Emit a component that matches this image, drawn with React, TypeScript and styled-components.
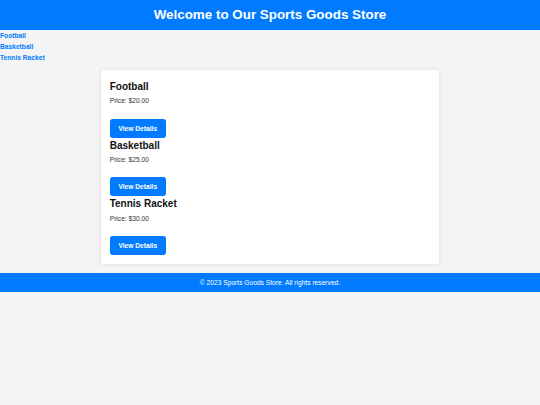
import React from "react";
import styled, { createGlobalStyle } from "styled-components";

const GlobalStyle = createGlobalStyle`
  body {
    margin: 0;
    background: #f4f4f4;
    font-family: "Liberation Sans", Arial, sans-serif;
    color: #000;
  }
`;

const Header = styled.header`
  background: #007bff;
  color: #fff;
  height: 30px;
  display: flex;
  align-items: center;
  justify-content: center;
`;

const Title = styled.h1`
  margin: 0;
  font-size: 13.4px;
  font-weight: bold;
  line-height: 1.15;
`;

const NavList = styled.ul`
  list-style: none;
  margin: 0;
  padding: 2.2px 0 0;
  font-size: 6.67px;
`;

const NavItem = styled.li`
  margin-bottom: 3.33px;
  line-height: 7.67px;
  &:last-child {
    margin-bottom: 0;
  }
`;

const NavLink = styled.a`
  color: #007bff;
  font-weight: bold;
  text-decoration: none;
`;

const Main = styled.main`
  padding: 8.1px 0 9.4px;
`;

const Card = styled.section`
  width: 338px;
  box-sizing: border-box;
  margin: 0 auto;
  background: #fff;
  border-radius: 3px;
  box-shadow: 0 0 5px rgba(0, 0, 0, 0.1);
  padding: 11.3px 8.7px 8.7px;
  display: flex;
  flex-direction: column;
  gap: 2px;
`;

const Product = styled.div`
  display: flex;
  flex-direction: column;
  align-items: flex-start;
`;

const ProductName = styled.h2`
  margin: 0 0 4.7px;
  font-size: 10px;
  font-weight: bold;
  line-height: 11.5px;
  color: #111;
`;

const Price = styled.p`
  margin: 0 0 13.7px;
  font-size: 6.67px;
  line-height: 7.67px;
  color: #333;
`;

const DetailsButton = styled.button`
  background: #007bff;
  color: #fff;
  border: none;
  border-radius: 2.7px;
  height: 19px;
  padding: 0 8.7px;
  font-family: inherit;
  font-size: 6.67px;
  font-weight: bold;
  cursor: pointer;
`;

const Footer = styled.footer`
  background: #007bff;
  color: #fff;
  height: 19px;
  display: flex;
  align-items: center;
  justify-content: center;
  font-size: 6.67px;
`;

const products = [
  { name: "Football", price: "$20.00" },
  { name: "Basketball", price: "$25.00" },
  { name: "Tennis Racket", price: "$30.00" },
];

export default function App() {
  return (
    <>
      <GlobalStyle />
      <Header>
        <Title>Welcome to Our Sports Goods Store</Title>
      </Header>
      <nav>
        <NavList>
          {products.map((p) => (
            <NavItem key={p.name}>
              <NavLink href="#">{p.name}</NavLink>
            </NavItem>
          ))}
        </NavList>
      </nav>
      <Main>
        <Card>
          {products.map((p) => (
            <Product key={p.name}>
              <ProductName>{p.name}</ProductName>
              <Price>Price: {p.price}</Price>
              <DetailsButton>View Details</DetailsButton>
            </Product>
          ))}
        </Card>
      </Main>
      <Footer>© 2023 Sports Goods Store. All rights reserved.</Footer>
    </>
  );
}
